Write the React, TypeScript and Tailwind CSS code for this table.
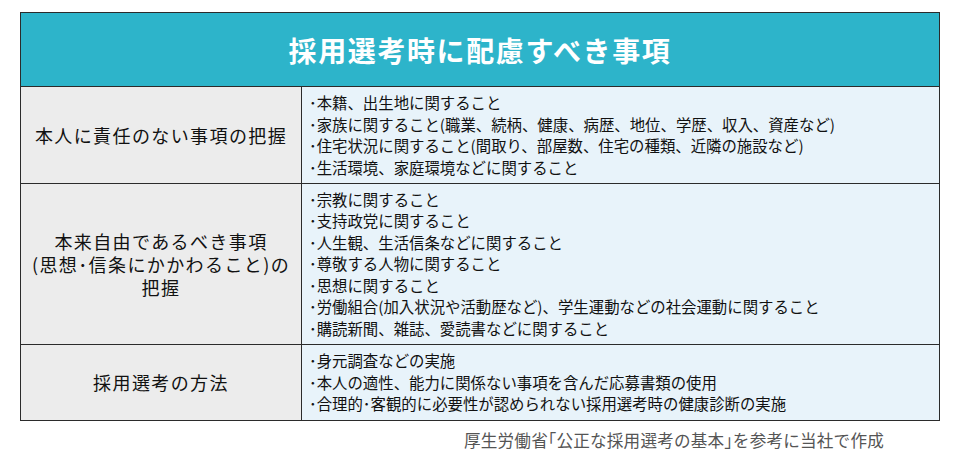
import React from "react";

const rows: { head: string[]; items: string[]; h: string }[] = [
  {
    head: ["本人に責任のない事項の把握"],
    items: [
      "･本籍、出生地に関すること",
      "･家族に関すること(職業、続柄、健康、病歴、地位、学歴、収入、資産など)",
      "･住宅状況に関すること(間取り、部屋数、住宅の種類、近隣の施設など)",
      "･生活環境、家庭環境などに関すること",
    ],
    h: "h-[97px]",
  },
  {
    head: ["本来自由であるべき事項", "(思想･信条にかかわること)の", "把握"],
    items: [
      "･宗教に関すること",
      "･支持政党に関すること",
      "･人生観、生活信条などに関すること",
      "･尊敬する人物に関すること",
      "･思想に関すること",
      "･労働組合(加入状況や活動歴など)、学生運動などの社会運動に関すること",
      "･購読新聞、雑誌、愛読書などに関すること",
    ],
    h: "h-[161px]",
  },
  {
    head: ["採用選考の方法"],
    items: [
      "･身元調査などの実施",
      "･本人の適性、能力に関係ない事項を含んだ応募書類の使用",
      "･合理的･客観的に必要性が認められない採用選考時の健康診断の実施",
    ],
    h: "h-[76px]",
  },
];

export default function App() {
  return (
    <div
      className="w-[960px] h-[460px] bg-white pt-[12px] pl-[20px]"
      style={{ fontFamily: '"Noto Sans CJK JP", "Noto Sans", sans-serif' }}
    >
      <table className="w-[920px] border-collapse table-fixed">
        <colgroup>
          <col className="w-[281px]" />
          <col />
        </colgroup>
        <tbody>
          <tr className="h-[74px]">
            <td
              colSpan={2}
              className="border-[1.5px] border-[#2b2b2b] bg-[#2db4ca] text-center text-white font-bold text-[28px] tracking-[1.6px] leading-none"
            >
              採用選考時に配慮すべき事項
            </td>
          </tr>
          {rows.map((r, i) => (
            <tr key={i} className={r.h}>
              <td className="border-[1.5px] border-[#2b2b2b] bg-[#ececec] text-center align-middle text-[18px] leading-[23px] tracking-[1.4px] text-[#111]">
                {r.head.map((t, j) => (
                  <div key={j} className="whitespace-nowrap">{t}</div>
                ))}
              </td>
              <td className="border-[1.5px] border-[#2b2b2b] bg-[#e8f3fa] align-middle pl-[7px] text-[15.4px] leading-[21.5px] text-[#111]">
                {r.items.map((t, j) => (
                  <div key={j} className="whitespace-nowrap">{t}</div>
                ))}
              </td>
            </tr>
          ))}
        </tbody>
      </table>
      <div className="w-[920px] flex justify-end pr-[56px] mt-[7px] text-[16.6px] tracking-[0.2px] text-[#555]">
        厚生労働省｢公正な採用選考の基本｣を参考に当社で作成
      </div>
    </div>
  );
}
